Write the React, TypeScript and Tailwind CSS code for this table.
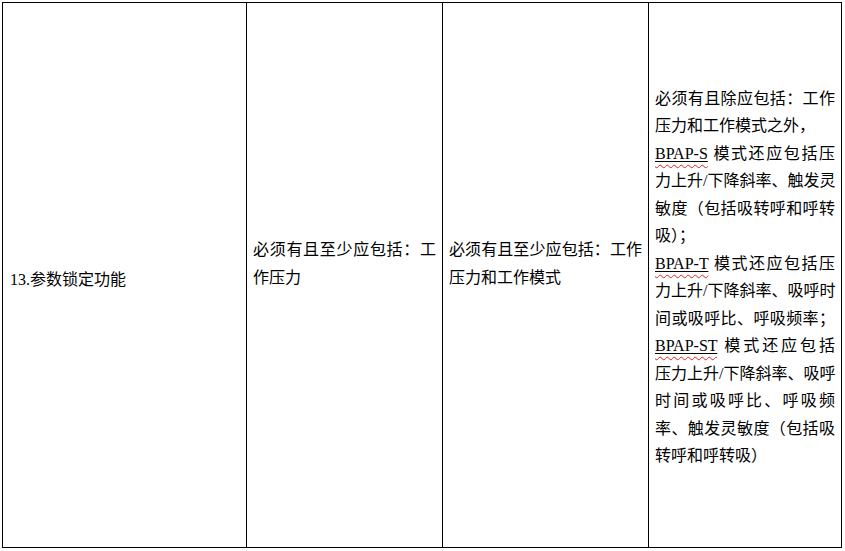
import React from "react";

const FONT = { fontFamily: '"Liberation Serif", "Noto Sans CJK SC", serif' };

const J = "whitespace-nowrap text-justify [text-align-last:justify]";
const N = "whitespace-nowrap";

function BP({ t }: { t: string }) {
  return (
    <span className="underline decoration-wavy decoration-[#e02020] decoration-1 underline-offset-[5px]">
      <span className="underline decoration-black decoration-1 underline-offset-[2px]">{t}</span>
    </span>
  );
}

export default function App() {
  return (
    <div className="bg-white w-[845px] h-[551px] pt-[2px] pl-[2px]" style={FONT}>
      <div className="w-[840px] h-[546px] border border-black grid grid-cols-[244px_196px_206px_192px] text-[16px] leading-[27.5px] text-black">
        <div className="border-r border-black flex flex-col justify-center px-[7px] pt-[9px]">
          <div className={N}>13.参数锁定功能</div>
        </div>
        <div className="border-r border-black flex flex-col justify-center px-[6px] pb-[23px]">
          <div className={J}>必须有且至少应包括：工</div>
          <div className={N}>作压力</div>
        </div>
        <div className="border-r border-black flex flex-col justify-center px-[6px] pb-[23px]">
          <div className={J}>必须有且至少应包括：工作</div>
          <div className={N}>压力和工作模式</div>
        </div>
        <div className="flex flex-col justify-center px-[6px] pt-[4px]">
          <div className={J}>必须有且除应包括：工作</div>
          <div className={N}>压力和工作模式之外，</div>
          <div className={J}>
            <BP t="BPAP-S" /> 模式还应包括压
          </div>
          <div className={J}>力上升/下降斜率、触发灵</div>
          <div className={J}>敏度（包括吸转呼和呼转</div>
          <div className={N}>吸）；</div>
          <div className={J}>
            <BP t="BPAP-T" /> 模式还应包括压
          </div>
          <div className={J}>力上升/下降斜率、吸呼时</div>
          <div className={J}>间或吸呼比、呼吸频率；</div>
          <div className={J}>
            <BP t="BPAP-ST" /> 模式还应包括
          </div>
          <div className={J}>压力上升/下降斜率、吸呼</div>
          <div className={J}>时间或吸呼比、呼吸频</div>
          <div className={J}>率、触发灵敏度（包括吸</div>
          <div className={N}>转呼和呼转吸）</div>
        </div>
      </div>
    </div>
  );
}
